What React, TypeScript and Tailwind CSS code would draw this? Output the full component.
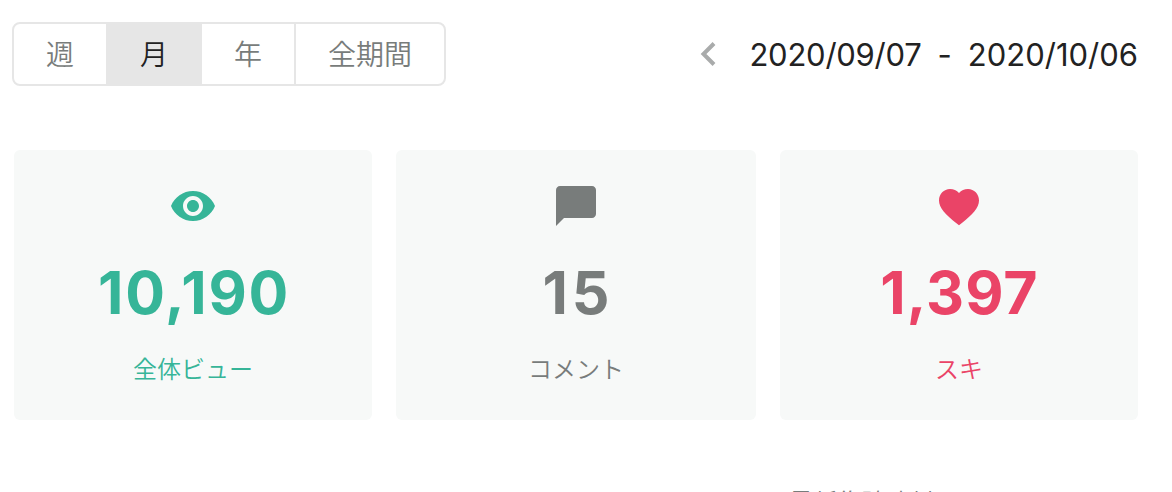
import type { ReactNode } from "react";
import { clsx } from "clsx";

const periods = [
  { label: "週", width: "w-[92px]" },
  { label: "月", width: "w-[96px]" },
  { label: "年", width: "w-[94px]" },
  { label: "全期間", width: "w-[148px]" },
];

export default function App() {
  return (
    <div className="h-[492px] overflow-hidden bg-white pt-[22px] pr-[34px] pl-3 font-['Inter','Noto_Sans_CJK_JP',sans-serif]">
      <div className="flex h-16 items-center justify-between">
        <PeriodTabs active="月" />
        <DateRange from="2020/09/07" to="2020/10/06" />
      </div>

      <div className="mt-16 ml-0.5 grid grid-cols-[358px_360px_358px] gap-6">
        <StatCard icon={<EyeIcon />} value="10,190" label="全体ビュー" color="text-[#36b598]" tracking="pl-0.5 tracking-[1.8px]" />
        <StatCard icon={<CommentIcon />} value="15" label="コメント" color="text-[#787c7b]" tracking="pl-1 tracking-[4px]" />
        <StatCard icon={<HeartIcon />} value="1,397" label="スキ" color="text-[#ea4467]" tracking="pl-px tracking-[1px]" />
      </div>

      <p className="mt-[65px] ml-[777px] text-2xl leading-9 font-[350] whitespace-nowrap text-[#787c7b]">最新集計時刻</p>
    </div>
  );
}

function PeriodTabs({ active }: { active: string }) {
  return (
    <div className="flex h-16 w-[434px] overflow-hidden rounded-lg border-2 border-[#e6e6e6]">
      {periods.map(p => (
        <button
          key={p.label}
          className={clsx(
            "shrink-0 pt-px text-[28px] leading-none font-[350]",
            p.width,
            p.label === active ? "bg-[#e6e6e6] text-[#222222]" : "text-[#787c7b]",
            p.label === "年" && "border-r-2 border-[#e6e6e6]",
          )}
        >
          {p.label}
        </button>
      ))}
    </div>
  );
}

function DateRange({ from, to }: { from: string; to: string }) {
  return (
    <div className="flex items-center text-[31px] leading-none text-[#222222]">
      <svg className="mr-[33px] h-6 w-4" viewBox="0 0 16 24" fill="none" stroke="#a9abab" strokeWidth="4">
        <path d="M14 1.5 3.5 12 14 22.5" />
      </svg>
      <span className="tracking-[-0.25px]">{from}</span>
      <span className="mx-4">-</span>
      <span>{to}</span>
    </div>
  );
}

interface StatCardProps {
  icon: ReactNode;
  value: string;
  label: string;
  color: string;
  tracking: string;
}

function StatCard({ icon, value, label, color, tracking }: StatCardProps) {
  return (
    <div className={clsx("flex h-[270px] flex-col items-center rounded-md bg-[#f7f9f8] pt-8", color)}>
      {icon}
      <p className={clsx("mt-[33px] text-[59px] leading-[60px] font-bold", tracking)}>{value}</p>
      <p className="mt-[29px] text-2xl leading-9 font-[350]">{label}</p>
    </div>
  );
}

function EyeIcon() {
  return (
    <svg className="size-12" viewBox="0 0 24 24" fill="currentColor">
      <path d="M12 4.5C7 4.5 2.73 7.61 1 12c1.73 4.39 6 7.5 11 7.5s9.27-3.11 11-7.5c-1.73-4.39-6-7.5-11-7.5zM12 17c-2.76 0-5-2.24-5-5s2.24-5 5-5 5 2.24 5 5-2.24 5-5 5zm0-8c-1.66 0-3 1.34-3 3s1.34 3 3 3 3-1.34 3-3-1.34-3-3-3z" />
    </svg>
  );
}

function CommentIcon() {
  return (
    <svg className="size-12" viewBox="0 0 24 24" fill="currentColor">
      <path d="M20 2H4c-1.1 0-1.99.9-1.99 2L2 22l4-4h14c1.1 0 2-.9 2-2V4c0-1.1-.9-2-2-2z" />
    </svg>
  );
}

function HeartIcon() {
  return (
    <svg className="size-12" viewBox="0 -0.5 24 24" fill="currentColor">
      <path d="M12 21.1l-1.45-1.1C5.4 15.6 2 12.6 2 8.7 2 5.5 4.42 3 7.5 3c1.74 0 3.41.7 4.5 2 1.09-1.3 2.76-2 4.5-2C19.58 3 22 5.5 22 8.7c0 3.9-3.4 6.9-8.55 11.3L12 21.1z" />
    </svg>
  );
}
